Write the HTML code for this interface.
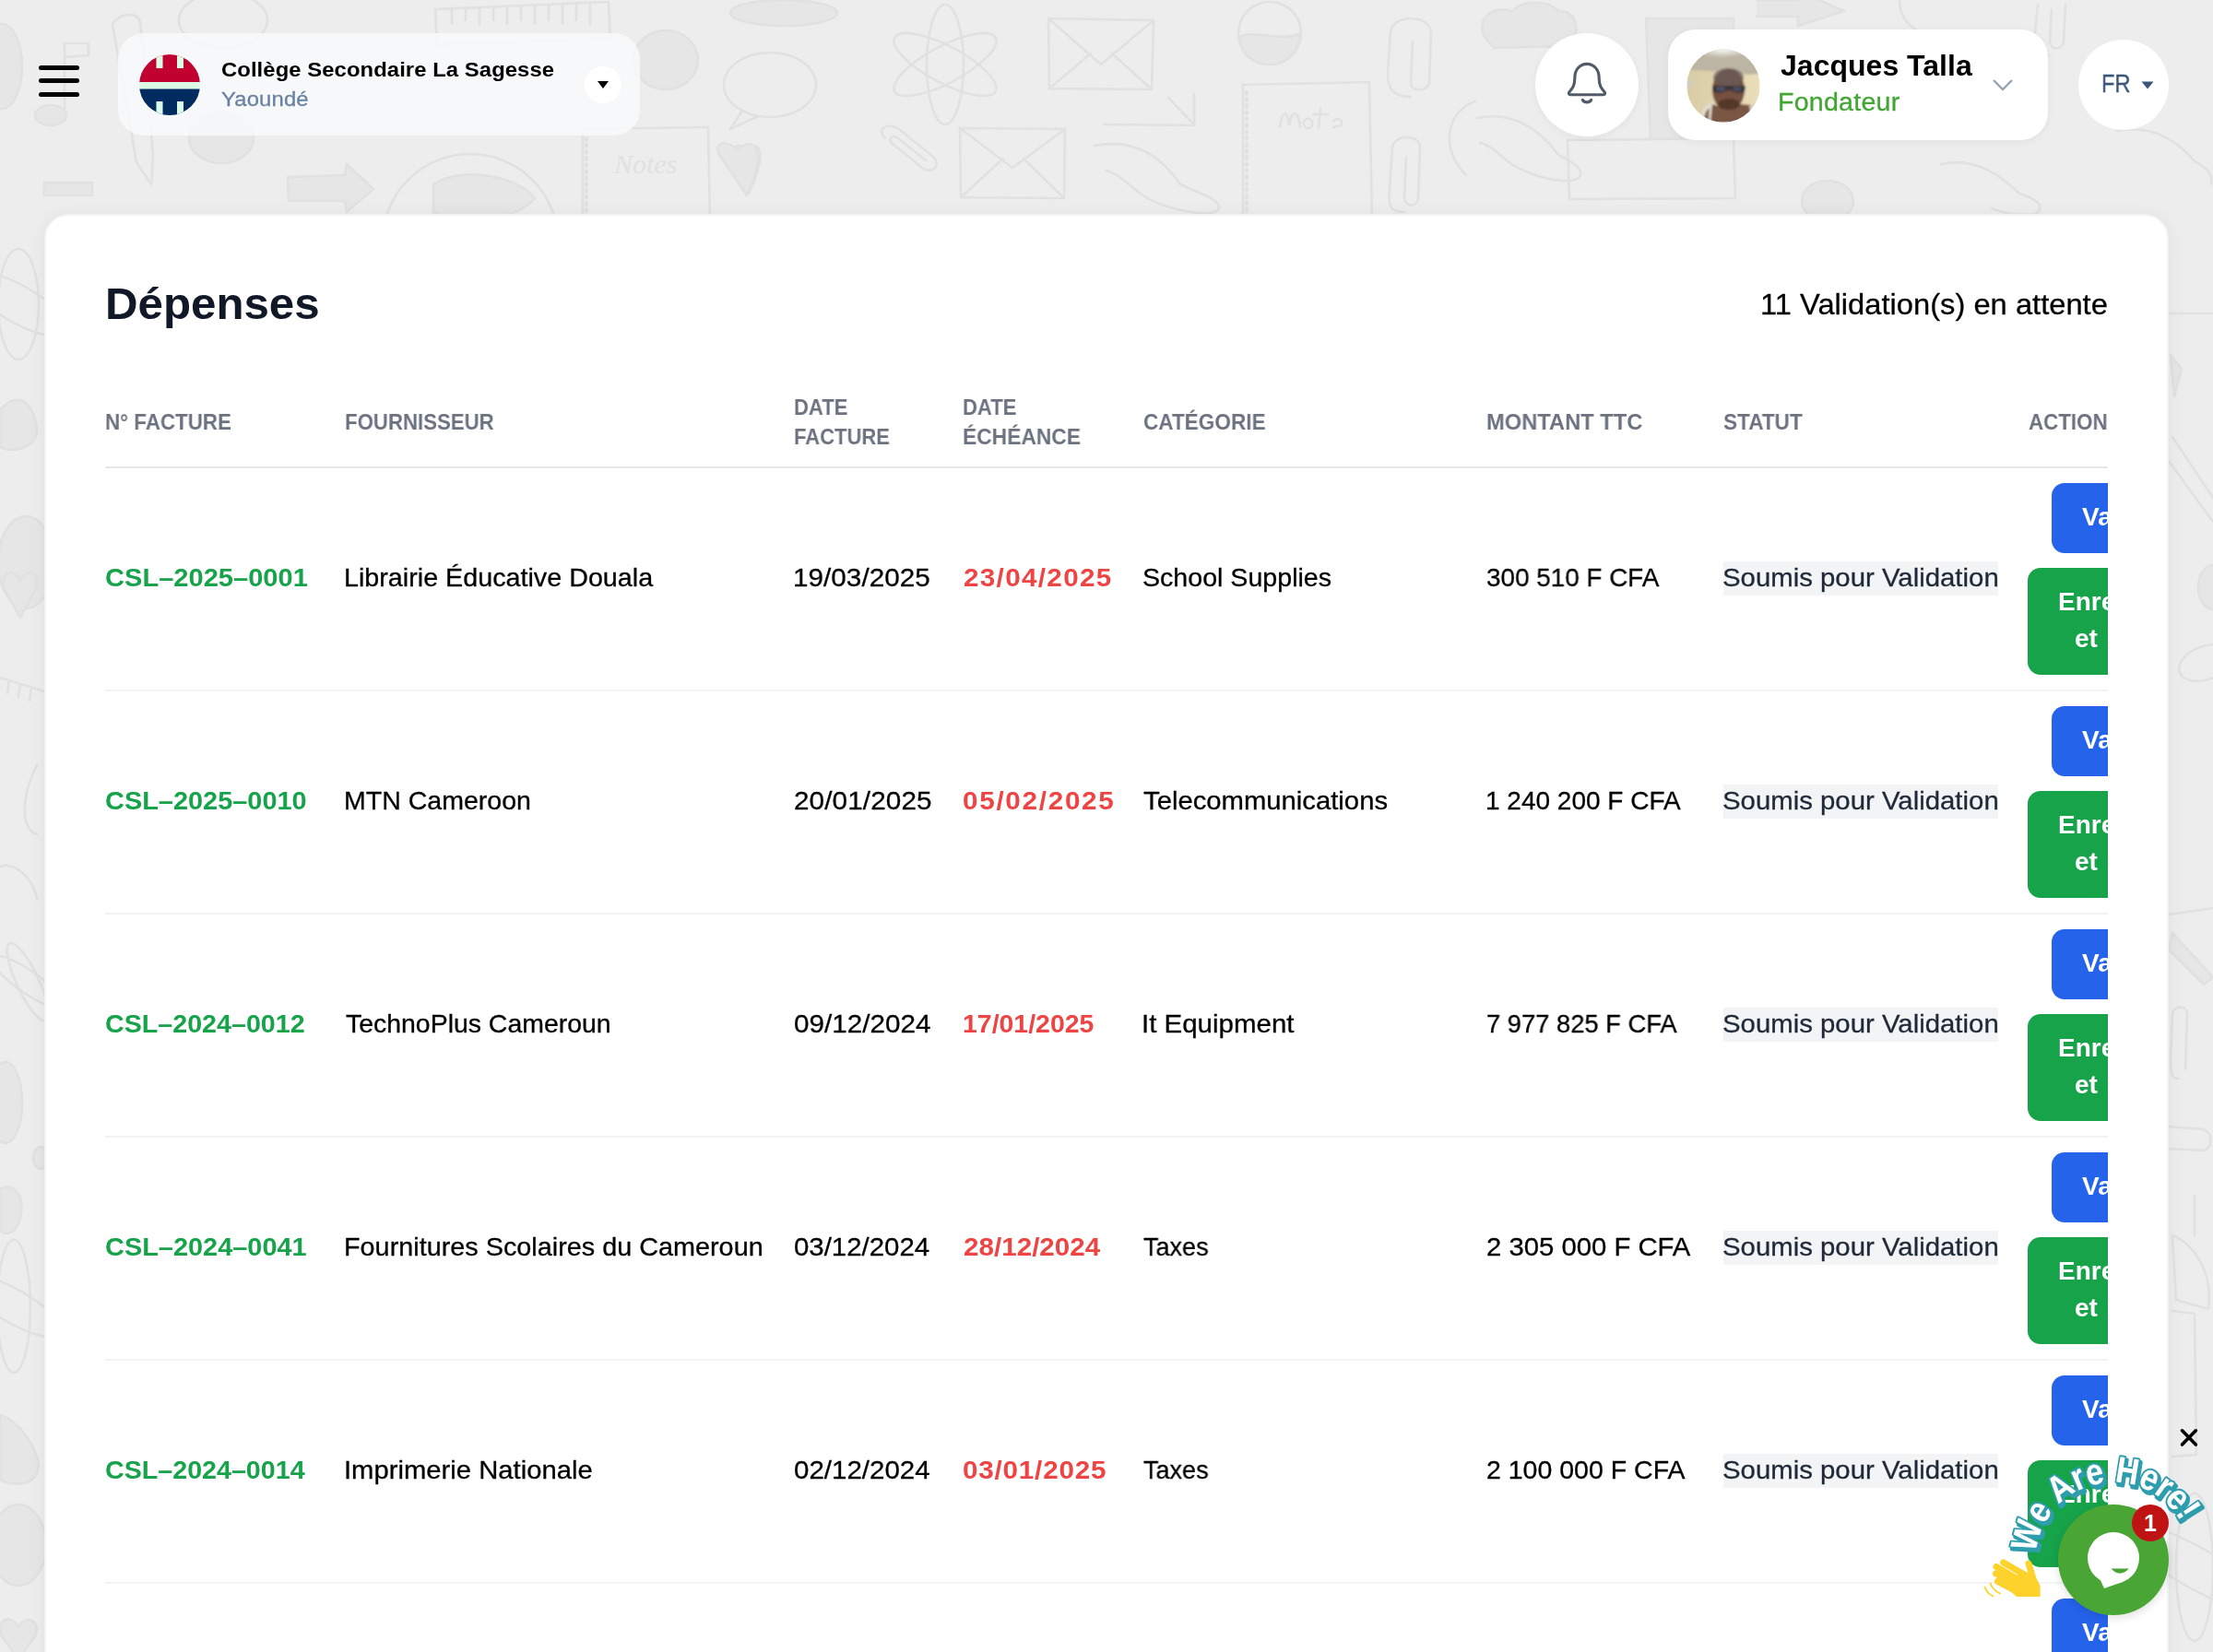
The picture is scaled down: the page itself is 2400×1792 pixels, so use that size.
<!DOCTYPE html>
<html><head><meta charset="utf-8">
<style>
html,body{margin:0;padding:0;}
body{width:2400px;height:1792px;overflow:hidden;position:relative;background:#ededed;font-family:"Liberation Sans",sans-serif;}
.a{position:absolute;}
.t{position:absolute;white-space:nowrap;line-height:1;font-family:"Liberation Sans",sans-serif;will-change:transform;}
.bar{position:absolute;left:42px;width:44px;height:5px;border-radius:3px;background:#000;}
.card{position:absolute;left:48px;top:232px;width:2300px;height:1700px;background:#fff;border:2px solid #f1f2f4;border-radius:26px;box-shadow:0 2px 20px rgba(0,0,0,0.06);}
.hl{position:absolute;left:114px;width:2172px;height:2px;background:#f3f4f6;}
.badge{position:absolute;left:1869px;width:298px;height:37px;background:#f3f4f6;}
.clip{position:absolute;left:0;top:0;width:2286px;height:1792px;overflow:hidden;}
.bb{position:absolute;left:2225px;width:200px;height:76px;background:#2563eb;border-radius:14px;}
.gb{position:absolute;left:2199px;width:250px;height:116px;background:#16a34a;border-radius:14px;}
.bt{position:absolute;white-space:nowrap;line-height:1;font-size:28px;font-weight:700;color:#fff;will-change:transform;}
</style></head>
<body>
<svg class="a" style="left:0;top:0" width="2400" height="1792" viewBox="0 0 2400 1792">
<g fill="none" stroke="#e1e1e1" stroke-width="2.6" stroke-linecap="round" stroke-linejoin="round">
<ellipse cx="2" cy="72" rx="22" ry="46" fill="#e6e6e6"/>
<path d="M70 125 L70 47 L96 47 L96 60 L70 62"/>
<ellipse cx="55" cy="125" rx="17" ry="11" fill="#e6e6e6"/>
<path d="M122 26 C130 14 148 12 152 24 L166 168 L164 200 L148 176 Z"/>
<ellipse cx="242" cy="22" rx="48" ry="30"/>
<ellipse cx="240" cy="150" rx="35" ry="27" fill="#e6e6e6"/>
<rect x="48" y="198" width="52" height="14" fill="#e6e6e6"/>
<path d="M312 192 L374 190 L376 178 L405 205 L376 230 L374 218 L313 218 Z" fill="#e6e6e6"/>
<circle cx="510" cy="262" r="95"/>
<path d="M470 200 C500 180 560 190 580 215 C560 240 500 245 470 230 Z" fill="#e6e6e6"/>
<path d="M472 10 L660 2 L662 42 L474 48 Z"/>
<path d="M490 10 L490 26 M505 9 L505 22 M520 9 L520 26 M535 8 L535 22 M550 8 L550 26 M565 7 L565 22 M580 7 L580 26 M595 6 L595 22 M610 5 L610 26 M625 5 L625 22 M640 4 L640 26"/>
<ellipse cx="722" cy="65" rx="35" ry="32" fill="#e6e6e6"/>
<path d="M630 140 L768 138 L770 240 M632 140 L632 240"/>
<path d="M636 150 L636 235" stroke-dasharray="2 5" stroke-width="4"/>
<ellipse cx="835" cy="92" rx="50" ry="35"/>
<path d="M805 120 L792 140 L822 126"/>
<ellipse cx="850" cy="14" rx="58" ry="14" fill="#e6e6e6"/>
<path d="M810 180 C790 160 800 150 810 165 C820 150 835 160 812 210 Z" fill="#e6e6e6"/>
<path d="M785 175 C770 158 782 148 800 162 C815 148 835 158 810 212 Z" fill="#e6e6e6"/>
<ellipse cx="1025" cy="70" rx="20" ry="65"/>
<ellipse cx="1025" cy="70" rx="62" ry="20" transform="rotate(28 1025 70)"/>
<ellipse cx="1025" cy="70" rx="62" ry="20" transform="rotate(-28 1025 70)"/>
<path d="M960 150 C950 140 962 132 975 140 L1012 170 C1022 180 1010 190 1000 182 L968 156 C962 150 968 146 974 150 L1004 174"/>
<path d="M1137 20 L1251 22 L1249 97 L1138 96 Z M1137 20 L1194 70 L1251 22 M1138 96 L1183 58 M1249 97 L1206 58"/>
<path d="M1041 139 L1155 140 L1154 215 L1042 214 Z M1041 139 L1098 182 L1155 140 M1042 214 L1088 172 M1154 215 L1110 172"/>
<path d="M1197 135 L1295 136 L1295 102 M1267 106 L1295 135"/>
<path d="M1187 158 C1230 150 1260 170 1280 200 C1300 210 1322 215 1322 225 C1320 235 1290 232 1260 222 C1230 212 1220 190 1200 185"/>
<circle cx="1377" cy="36" r="34"/>
<path d="M1344 40 C1360 32 1392 46 1410 36 C1408 60 1392 70 1377 70 C1360 70 1346 60 1344 40 Z" fill="#e6e6e6"/>
<path d="M1348 92 L1485 89 L1488 240 M1348 92 L1348 240"/>
<path d="M1352 100 L1352 235" stroke-dasharray="2 5" stroke-width="4"/>
<path d="M1388 138 C1390 120 1396 118 1398 135 C1402 118 1408 120 1410 138 M1414 132 C1418 125 1426 130 1422 138 C1416 142 1412 134 1414 132 M1432 118 L1430 138 M1424 124 L1440 124 M1446 132 C1450 126 1458 130 1454 136 L1446 138"/>
<path d="M1530 105 C1510 105 1505 95 1505 80 L1508 35 C1510 15 1550 15 1552 35 L1550 90 C1548 100 1530 100 1530 90 L1532 45"/>
<path d="M1523 230 C1505 230 1506 220 1507 205 L1510 160 C1512 145 1540 145 1540 160 L1538 215 C1537 225 1524 225 1523 215 L1525 170"/>
<path d="M1600 110 C1570 120 1560 160 1590 190"/>
<path d="M1610 40 C1600 20 1620 5 1640 12 C1650 0 1680 0 1690 12 C1712 10 1715 40 1700 50 L1620 52 Z" fill="#e6e6e6"/>
<path d="M1602 128 C1640 120 1670 140 1690 168 C1705 176 1716 182 1714 190 C1710 200 1680 196 1660 188 C1630 178 1625 160 1605 155"/>
<path d="M1700 152 L1880 150 L1882 215 L1702 216 Z"/>
<path d="M1785 20 L1880 20 L1878 150 L1790 150 Z" fill="#e6e6e6"/>
<ellipse cx="1982" cy="218" rx="28" ry="22" fill="#e6e6e6"/>
<path d="M2105 178 C2140 170 2170 190 2190 210 C2205 215 2215 220 2212 228 C2208 236 2180 234 2160 226"/>
<path d="M2296 142 C2330 135 2360 150 2380 175 C2395 182 2400 190 2398 200"/>
<path d="M2222 60 C2205 60 2206 50 2207 35 L2210 5 M2240 5 L2238 45 C2237 55 2224 55 2223 45 L2225 10"/>
<path d="M1905 0 L1950 0 L1950 -10 L2000 12 L1950 28 L1950 18 L1905 18" fill="#e6e6e6"/>
<path d="M2060 0 C2060 30 2090 45 2125 40"/>
<ellipse cx="20" cy="330" rx="22" ry="60"/>
<ellipse cx="20" cy="330" rx="60" ry="20" transform="rotate(30 20 330)"/>
<path d="M0 445 C20 420 40 440 40 470 C35 490 10 490 0 485 Z" fill="#e6e6e6"/>
<ellipse cx="28" cy="610" rx="30" ry="50" fill="#e6e6e6"/>
<path d="M5 640 C0 620 15 615 22 630 C30 615 45 620 38 640 L22 670 Z" fill="#e6e6e6"/>
<path d="M0 735 L48 750 M10 738 L8 752 M22 742 L20 756 M34 746 L32 760"/>
<path d="M40 830 C20 870 25 900 40 905"/>
<path d="M0 940 C15 935 35 950 40 975"/>
<ellipse cx="30" cy="1065" rx="12" ry="46" transform="rotate(-25 30 1065)"/>
<ellipse cx="30" cy="1065" rx="46" ry="12" transform="rotate(35 30 1065)"/>
<ellipse cx="6" cy="1196" rx="18" ry="44" fill="#e6e6e6"/>
<ellipse cx="44" cy="1256" rx="8" ry="12" fill="#e6e6e6"/>
<path d="M0 1290 C15 1280 28 1300 22 1320 C18 1340 5 1340 0 1335 Z" fill="#e6e6e6"/>
<ellipse cx="15" cy="1417" rx="18" ry="72"/>
<ellipse cx="15" cy="1417" rx="60" ry="18" transform="rotate(30 15 1417)"/>
<path d="M0 1535 C20 1540 40 1570 42 1590 C40 1610 20 1614 0 1605 Z" fill="#e6e6e6"/>
<ellipse cx="20" cy="1676" rx="30" ry="44" fill="#e6e6e6"/>
<path d="M2 1775 C-5 1755 12 1750 20 1765 C28 1750 45 1758 38 1775 L20 1800 Z" fill="#e6e6e6"/>
<path d="M2352 340 L2400 340"/>
<path d="M2354 385 L2366 400 L2358 430 Z" fill="#e6e6e6"/>
<path d="M2356 474 L2400 540 M2352 500 L2400 566"/>
<ellipse cx="2400" cy="637" rx="16" ry="24" fill="#e6e6e6"/>
<ellipse cx="2392" cy="719" rx="30" ry="18" transform="rotate(-20 2392 719)"/>
<path d="M2352 992 L2400 985"/>
<path d="M2356 1012 L2400 1060 L2390 1068 L2352 1030 Z" fill="#e6e6e6"/>
<path d="M2362 1170 C2354 1170 2354 1160 2354 1150 L2356 1100 C2358 1090 2372 1090 2372 1100 L2370 1160"/>
<path d="M2352 1222 L2390 1225 C2400 1230 2400 1245 2390 1248 L2352 1246"/>
<path d="M2380 1297 L2380 1340"/>
<path d="M2356 1340 C2380 1350 2400 1380 2395 1420 L2360 1410 Z"/>
<path d="M2356 1422 L2380 1425 L2382 1578 L2356 1580"/>
<ellipse cx="2380" cy="1700" rx="20" ry="80"/>
<ellipse cx="2380" cy="1700" rx="80" ry="22" transform="rotate(30 2380 1700)"/>
</g>
<text x="666" y="188" font-family="Liberation Serif" font-style="italic" font-size="30" fill="#e1e1e1">Notes</text>
</svg>
<div class="bar" style="top:71px"></div>
<div class="bar" style="top:85px"></div>
<div class="bar" style="top:100px"></div>

<div class="a" style="left:128px;top:36px;width:566px;height:111px;border-radius:28px;background:rgba(248,249,251,0.85);"></div>
<svg class="a" style="left:151px;top:59px" width="66" height="66" viewBox="0 0 66 66">
<defs><clipPath id="lc"><circle cx="33" cy="33" r="33"/></clipPath></defs>
<g clip-path="url(#lc)">
<rect x="0" y="0" width="66" height="30" fill="#c10230"/>
<rect x="0" y="30" width="66" height="7.5" fill="#dcfce7"/>
<rect x="0" y="37.5" width="66" height="30" fill="#002c5f"/>
<rect x="18.5" y="0" width="7" height="15" fill="#dcfce7"/>
<rect x="41" y="0" width="7" height="15" fill="#dcfce7"/>
<rect x="18.5" y="51" width="7" height="15" fill="#dcfce7"/>
<rect x="41" y="51" width="7" height="15" fill="#dcfce7"/>
</g></svg>
<div class="a" style="left:634px;top:72px;width:40px;height:40px;border-radius:50%;background:#fff;"></div>
<svg class="a" style="left:647px;top:87px" width="14" height="10" viewBox="0 0 14 10"><path d="M1 1 L13 1 L7 9 Z" fill="#000"/></svg>

<div class="a" style="left:1665px;top:36px;width:112px;height:112px;border-radius:50%;background:#fff;box-shadow:0 2px 8px rgba(0,0,0,0.05);"></div>
<svg class="a" style="left:1695px;top:62px" width="52" height="58" viewBox="0 0 52 58">
<g transform="translate(26 29) scale(0.94) translate(-26 -29)">
<path d="M7 41.5 C5 41.5 4.5 39.5 6 38 C9.5 34 12 31 12 22 C12 12.5 18 6 26 6 C34 6 40 12.5 40 22 C40 31 42.5 34 46 38 C47.5 39.5 47 41.5 45 41.5 Z" fill="none" stroke="#525b69" stroke-width="3.3" stroke-linejoin="round"/>
<path d="M21 47.5 C23 51 29 51 31 47.5" fill="none" stroke="#525b69" stroke-width="3.3" stroke-linecap="round"/>
</g></svg>

<div class="a" style="left:1809px;top:32px;width:412px;height:120px;border-radius:30px;background:#fff;box-shadow:0 2px 10px rgba(0,0,0,0.05);"></div>
<svg class="a" style="left:1829px;top:52.5px" width="80" height="80" viewBox="0 0 80 80">
<defs><clipPath id="av"><circle cx="40" cy="40" r="39.7"/></clipPath>
<radialGradient id="avt" cx="0.49" cy="0.0" r="0.38"><stop offset="0" stop-color="#ffffff"/><stop offset="1" stop-color="#ffffff" stop-opacity="0"/></radialGradient>
<linearGradient id="avw" x1="0" y1="0" x2="1" y2="0"><stop offset="0" stop-color="#d8cca6"/><stop offset="1" stop-color="#eadfba"/></linearGradient>
<filter id="avb"><feGaussianBlur stdDeviation="1"/></filter></defs>
<g clip-path="url(#av)"><g filter="url(#avb)">
<rect width="80" height="80" fill="url(#avw)"/>
<path d="M-2 -2 L82 -2 L82 27 L68 28 L40 25 L4 23 L-2 23 Z" fill="#bdb5a3"/>
<rect width="80" height="26" fill="url(#avt)"/>
<path d="M0 35 L9 35 L3 42 L0 44 Z" fill="#cfccc3"/>
<path d="M14 80 L19 64 L30 56 L28 80 Z" fill="#e4dfd3"/>
<path d="M17 80 L21 68 L25 64 L24 80 Z" fill="#8a6c58"/>
<path d="M26 80 L28 60 L40 64 L58 60 L71 61 L75 80 Z" fill="#7a5644"/>
<path d="M68 62 L77 59 L80 80 L72 80 Z" fill="#dcd4c4"/>
<ellipse cx="45.5" cy="44.5" rx="17.5" ry="23" fill="#76513f"/>
<ellipse cx="45.5" cy="31" rx="16.5" ry="10" fill="#6a5c5a" opacity="0.75"/>
<ellipse cx="46" cy="60" rx="12" ry="6" fill="#533725"/>
<path d="M28 40 L64 40 L63 47 L55 48 L47 45 L45 45 L37 48 L29 47 Z" fill="#3b3438"/>
<ellipse cx="37" cy="43.5" rx="5" ry="2.4" fill="#4c5266"/>
<ellipse cx="55" cy="43.5" rx="5" ry="2.4" fill="#4a4d60"/>
</g></g></svg>
<svg class="a" style="left:2159px;top:84px" width="26" height="16" viewBox="0 0 26 16"><path d="M3 3 L13 13 L23 3" fill="none" stroke="#97a3b6" stroke-width="2.4"/></svg>

<div class="a" style="left:2254px;top:43px;width:98px;height:98px;border-radius:50%;background:#fff;"></div>
<svg class="a" style="left:2321px;top:87px" width="16" height="11" viewBox="0 0 16 11"><path d="M1.5 1.5 L14.5 1.5 L8 9.5 Z" fill="#3b5578"/></svg>

<div class="card"></div>
<div class="a" style="left:114px;top:506px;width:2172px;height:2px;background:#e5e7eb;"></div>
<div class="hl" style="top:748px"></div>
<div class="hl" style="top:990px"></div>
<div class="hl" style="top:1232px"></div>
<div class="hl" style="top:1474px"></div>
<div class="hl" style="top:1716px"></div>
<div class="badge" style="top:609px"></div>
<div class="badge" style="top:851px"></div>
<div class="badge" style="top:1093px"></div>
<div class="badge" style="top:1335px"></div>
<div class="badge" style="top:1577px"></div>

<div class="clip">
<div class="bb" style="top:524px"></div>
<div class="bt" style="left:2258px;top:547.3px">Valider</div>
<div class="gb" style="top:616px"></div>
<div class="bt" style="left:2232px;top:639.3px">Enregistrer</div>
<div class="bt" style="left:2250px;top:678.7px">et</div>
<div class="bb" style="top:766px"></div>
<div class="bt" style="left:2258px;top:789.3px">Valider</div>
<div class="gb" style="top:858px"></div>
<div class="bt" style="left:2232px;top:881.3px">Enregistrer</div>
<div class="bt" style="left:2250px;top:920.7px">et</div>
<div class="bb" style="top:1008px"></div>
<div class="bt" style="left:2258px;top:1031.3px">Valider</div>
<div class="gb" style="top:1100px"></div>
<div class="bt" style="left:2232px;top:1123.3px">Enregistrer</div>
<div class="bt" style="left:2250px;top:1162.7px">et</div>
<div class="bb" style="top:1250px"></div>
<div class="bt" style="left:2258px;top:1273.3px">Valider</div>
<div class="gb" style="top:1342px"></div>
<div class="bt" style="left:2232px;top:1365.3px">Enregistrer</div>
<div class="bt" style="left:2250px;top:1404.7px">et</div>
<div class="bb" style="top:1492px"></div>
<div class="bt" style="left:2258px;top:1515.3px">Valider</div>
<div class="gb" style="top:1584px"></div>
<div class="bt" style="left:2232px;top:1607.3px">Enregistrer</div>
<div class="bt" style="left:2250px;top:1646.7px">et</div>
<div class="bb" style="top:1734px"></div>
<div class="bt" style="left:2258px;top:1757.3px">Valider</div>
</div>

<div class="t" style="left:240.00px;top:64.95px;font-size:22.5px;font-weight:700;color:#000;letter-spacing:0.061px;transform:scaleX(1.0600);transform-origin:0 0;">Collège Secondaire La Sagesse</div>
<div class="t" style="left:240.00px;top:96.55px;font-size:22.5px;font-weight:400;color:#6882a0;letter-spacing:0.137px;transform:scaleX(1.0600);transform-origin:0 0;-webkit-text-stroke:0.3px currentColor;">Yaoundé</div>
<div class="t" style="left:1930.50px;top:56.35px;font-size:31px;font-weight:700;color:#000;letter-spacing:0.000px;transform:scaleX(1.0333);transform-origin:0 0;">Jacques Talla</div>
<div class="t" style="left:1928.38px;top:98.14px;font-size:27px;font-weight:400;color:#42a633;letter-spacing:0.205px;transform:scaleX(1.0600);transform-origin:0 0;-webkit-text-stroke:0.3px currentColor;">Fondateur</div>
<div class="t" style="left:2279.21px;top:77.19px;font-size:28px;font-weight:400;color:#3b5578;letter-spacing:0.000px;transform:scaleX(0.8474);transform-origin:0 0;-webkit-text-stroke:0.3px currentColor;">FR</div>
<div class="t" style="left:113.89px;top:305.58px;font-size:47.5px;font-weight:700;color:#111827;letter-spacing:0.000px;transform:scaleX(1.0364);transform-origin:0 0;">Dépenses</div>
<div class="t" style="left:1908.96px;top:313.91px;font-size:32px;font-weight:400;color:#000;letter-spacing:0.000px;transform:scaleX(1.0218);transform-origin:0 0;-webkit-text-stroke:0.3px currentColor;">11 Validation(s) en attente</div>
<div class="t" style="left:113.57px;top:445.98px;font-size:24px;font-weight:700;color:#6b7280;letter-spacing:0.000px;transform:scaleX(0.9320);transform-origin:0 0;">N° FACTURE</div>
<div class="t" style="left:374.07px;top:445.98px;font-size:24px;font-weight:700;color:#6b7280;letter-spacing:0.000px;transform:scaleX(0.9259);transform-origin:0 0;">FOURNISSEUR</div>
<div class="t" style="left:861.08px;top:429.98px;font-size:24px;font-weight:700;color:#6b7280;letter-spacing:0.000px;transform:scaleX(0.9194);transform-origin:0 0;">DATE</div>
<div class="t" style="left:861.08px;top:461.98px;font-size:24px;font-weight:700;color:#6b7280;letter-spacing:0.000px;transform:scaleX(0.9170);transform-origin:0 0;">FACTURE</div>
<div class="t" style="left:1043.58px;top:429.98px;font-size:24px;font-weight:700;color:#6b7280;letter-spacing:0.000px;transform:scaleX(0.9194);transform-origin:0 0;">DATE</div>
<div class="t" style="left:1043.55px;top:461.98px;font-size:24px;font-weight:700;color:#6b7280;letter-spacing:0.000px;transform:scaleX(0.9501);transform-origin:0 0;">ÉCHÉANCE</div>
<div class="t" style="left:1240.00px;top:445.98px;font-size:24px;font-weight:700;color:#6b7280;letter-spacing:0.000px;transform:scaleX(0.9405);transform-origin:0 0;">CATÉGORIE</div>
<div class="t" style="left:1612.01px;top:445.98px;font-size:24px;font-weight:700;color:#6b7280;letter-spacing:0.000px;transform:scaleX(0.9872);transform-origin:0 0;">MONTANT TTC</div>
<div class="t" style="left:1868.80px;top:445.98px;font-size:24px;font-weight:700;color:#6b7280;letter-spacing:0.000px;transform:scaleX(0.9406);transform-origin:0 0;">STATUT</div>
<div class="t" style="left:2199.50px;top:445.98px;font-size:24px;font-weight:700;color:#6b7280;letter-spacing:0.000px;transform:scaleX(0.9300);transform-origin:0 0;width:93px;overflow:hidden;">ACTION</div>
<div class="t" style="left:113.66px;top:613.29px;font-size:28px;font-weight:700;color:#16a34a;letter-spacing:0.000px;transform:scaleX(1.0383);transform-origin:0 0;">CSL–2025–0001</div>
<div class="t" style="left:373.15px;top:613.29px;font-size:28px;font-weight:400;color:#000;letter-spacing:-0.000px;transform:scaleX(1.0253);transform-origin:0 0;-webkit-text-stroke:0.3px currentColor;">Librairie Éducative Douala</div>
<div class="t" style="left:859.88px;top:613.29px;font-size:28px;font-weight:400;color:#000;letter-spacing:0.020px;transform:scaleX(1.0600);transform-origin:0 0;-webkit-text-stroke:0.3px currentColor;">19/03/2025</div>
<div class="t" style="left:1044.60px;top:613.29px;font-size:28px;font-weight:700;color:#ef4444;letter-spacing:1.229px;transform:scaleX(1.0600);transform-origin:0 0;">23/04/2025</div>
<div class="t" style="left:1239.28px;top:613.29px;font-size:28px;font-weight:400;color:#000;letter-spacing:0.000px;transform:scaleX(1.0211);transform-origin:0 0;-webkit-text-stroke:0.3px currentColor;">School Supplies</div>
<div class="t" style="left:1611.81px;top:613.29px;font-size:28px;font-weight:400;color:#000;letter-spacing:0.000px;transform:scaleX(0.9944);transform-origin:0 0;-webkit-text-stroke:0.3px currentColor;">300 510 F CFA</div>
<div class="t" style="left:1868.15px;top:613.29px;font-size:28px;font-weight:400;color:#1f2937;letter-spacing:0.000px;transform:scaleX(1.0484);transform-origin:0 0;-webkit-text-stroke:0.3px currentColor;">Soumis pour Validation</div>
<div class="t" style="left:113.67px;top:855.29px;font-size:28px;font-weight:700;color:#16a34a;letter-spacing:-0.000px;transform:scaleX(1.0326);transform-origin:0 0;">CSL–2025–0010</div>
<div class="t" style="left:373.16px;top:855.29px;font-size:28px;font-weight:400;color:#000;letter-spacing:0.000px;transform:scaleX(1.0190);transform-origin:0 0;-webkit-text-stroke:0.3px currentColor;">MTN Cameroon</div>
<div class="t" style="left:860.94px;top:855.29px;font-size:28px;font-weight:400;color:#000;letter-spacing:0.102px;transform:scaleX(1.0600);transform-origin:0 0;-webkit-text-stroke:0.3px currentColor;">20/01/2025</div>
<div class="t" style="left:1043.54px;top:855.29px;font-size:28px;font-weight:700;color:#ef4444;letter-spacing:1.602px;transform:scaleX(1.0600);transform-origin:0 0;">05/02/2025</div>
<div class="t" style="left:1240.30px;top:855.29px;font-size:28px;font-weight:400;color:#000;letter-spacing:0.000px;transform:scaleX(1.0448);transform-origin:0 0;-webkit-text-stroke:0.3px currentColor;">Telecommunications</div>
<div class="t" style="left:1610.80px;top:855.29px;font-size:28px;font-weight:400;color:#000;letter-spacing:0.000px;transform:scaleX(1.0000);transform-origin:0 0;-webkit-text-stroke:0.3px currentColor;">1 240 200 F CFA</div>
<div class="t" style="left:1868.15px;top:855.29px;font-size:28px;font-weight:400;color:#1f2937;letter-spacing:0.000px;transform:scaleX(1.0484);transform-origin:0 0;-webkit-text-stroke:0.3px currentColor;">Soumis pour Validation</div>
<div class="t" style="left:113.68px;top:1097.29px;font-size:28px;font-weight:700;color:#16a34a;letter-spacing:-0.000px;transform:scaleX(1.0231);transform-origin:0 0;">CSL–2024–0012</div>
<div class="t" style="left:375.20px;top:1097.29px;font-size:28px;font-weight:400;color:#000;letter-spacing:0.000px;transform:scaleX(1.0153);transform-origin:0 0;-webkit-text-stroke:0.3px currentColor;">TechnoPlus Cameroun</div>
<div class="t" style="left:860.94px;top:1097.29px;font-size:28px;font-weight:400;color:#000;letter-spacing:0.000px;transform:scaleX(1.0594);transform-origin:0 0;-webkit-text-stroke:0.3px currentColor;">09/12/2024</div>
<div class="t" style="left:1043.58px;top:1097.29px;font-size:28px;font-weight:700;color:#ef4444;letter-spacing:0.000px;transform:scaleX(1.0161);transform-origin:0 0;">17/01/2025</div>
<div class="t" style="left:1238.19px;top:1097.29px;font-size:28px;font-weight:400;color:#000;letter-spacing:0.000px;transform:scaleX(1.0526);transform-origin:0 0;-webkit-text-stroke:0.3px currentColor;">It Equipment</div>
<div class="t" style="left:1611.82px;top:1097.29px;font-size:28px;font-weight:400;color:#000;letter-spacing:0.000px;transform:scaleX(0.9763);transform-origin:0 0;-webkit-text-stroke:0.3px currentColor;">7 977 825 F CFA</div>
<div class="t" style="left:1868.15px;top:1097.29px;font-size:28px;font-weight:400;color:#1f2937;letter-spacing:0.000px;transform:scaleX(1.0484);transform-origin:0 0;-webkit-text-stroke:0.3px currentColor;">Soumis pour Validation</div>
<div class="t" style="left:113.67px;top:1339.29px;font-size:28px;font-weight:700;color:#16a34a;letter-spacing:-0.000px;transform:scaleX(1.0326);transform-origin:0 0;">CSL–2024–0041</div>
<div class="t" style="left:373.14px;top:1339.29px;font-size:28px;font-weight:400;color:#000;letter-spacing:-0.000px;transform:scaleX(1.0287);transform-origin:0 0;-webkit-text-stroke:0.3px currentColor;">Fournitures Scolaires du Cameroun</div>
<div class="t" style="left:860.95px;top:1339.29px;font-size:28px;font-weight:400;color:#000;letter-spacing:0.000px;transform:scaleX(1.0501);transform-origin:0 0;-webkit-text-stroke:0.3px currentColor;">03/12/2024</div>
<div class="t" style="left:1044.60px;top:1339.29px;font-size:28px;font-weight:700;color:#ef4444;letter-spacing:0.000px;transform:scaleX(1.0579);transform-origin:0 0;">28/12/2024</div>
<div class="t" style="left:1240.30px;top:1339.29px;font-size:28px;font-weight:400;color:#000;letter-spacing:0.000px;transform:scaleX(0.9647);transform-origin:0 0;-webkit-text-stroke:0.3px currentColor;">Taxes</div>
<div class="t" style="left:1611.75px;top:1339.29px;font-size:28px;font-weight:400;color:#000;letter-spacing:0.000px;transform:scaleX(1.0459);transform-origin:0 0;-webkit-text-stroke:0.3px currentColor;">2 305 000 F CFA</div>
<div class="t" style="left:1868.15px;top:1339.29px;font-size:28px;font-weight:400;color:#1f2937;letter-spacing:0.000px;transform:scaleX(1.0484);transform-origin:0 0;-webkit-text-stroke:0.3px currentColor;">Soumis pour Validation</div>
<div class="t" style="left:113.68px;top:1581.29px;font-size:28px;font-weight:700;color:#16a34a;letter-spacing:-0.000px;transform:scaleX(1.0230);transform-origin:0 0;">CSL–2024–0014</div>
<div class="t" style="left:373.11px;top:1581.29px;font-size:28px;font-weight:400;color:#000;letter-spacing:0.000px;transform:scaleX(1.0440);transform-origin:0 0;-webkit-text-stroke:0.3px currentColor;">Imprimerie Nationale</div>
<div class="t" style="left:860.95px;top:1581.29px;font-size:28px;font-weight:400;color:#000;letter-spacing:0.000px;transform:scaleX(1.0537);transform-origin:0 0;-webkit-text-stroke:0.3px currentColor;">02/12/2024</div>
<div class="t" style="left:1043.54px;top:1581.29px;font-size:28px;font-weight:700;color:#ef4444;letter-spacing:0.725px;transform:scaleX(1.0600);transform-origin:0 0;">03/01/2025</div>
<div class="t" style="left:1240.30px;top:1581.29px;font-size:28px;font-weight:400;color:#000;letter-spacing:0.000px;transform:scaleX(0.9647);transform-origin:0 0;-webkit-text-stroke:0.3px currentColor;">Taxes</div>
<div class="t" style="left:1611.78px;top:1581.29px;font-size:28px;font-weight:400;color:#000;letter-spacing:0.000px;transform:scaleX(1.0180);transform-origin:0 0;-webkit-text-stroke:0.3px currentColor;">2 100 000 F CFA</div>
<div class="t" style="left:1868.15px;top:1581.29px;font-size:28px;font-weight:400;color:#1f2937;letter-spacing:0.000px;transform:scaleX(1.0484);transform-origin:0 0;-webkit-text-stroke:0.3px currentColor;">Soumis pour Validation</div>

<svg class="a" style="left:2140px;top:1540px;overflow:visible" width="260" height="252" viewBox="0 0 260 252">
<defs>
<filter id="sh" x="-30%" y="-30%" width="160%" height="160%"><feDropShadow dx="0" dy="3" stdDeviation="5" flood-color="#000" flood-opacity="0.12"/></filter>
<path id="arc" d="M 73.1 180.7 A 84 84 0 1 1 230.9 180.7"/>
</defs>
<path d="M226.5 11.8 L241.4 27 M241.4 11.8 L226.5 27" stroke="#000" stroke-width="3.6" stroke-linecap="round"/>
<circle cx="152" cy="152" r="60" fill="#4aa634" filter="url(#sh)"/>
<circle cx="152" cy="150" r="28" fill="#fff"/>
<path d="M136 170 L142 183 L162 176 Z" fill="#fff"/>
<path d="M149.5 161.6 Q159 172 168.8 161.6 Z" fill="#4aa634"/>
<circle cx="192" cy="112" r="20" fill="#c01414"/>
<text x="192" y="121" text-anchor="middle" font-family="Liberation Sans" font-weight="700" font-size="25" fill="#fff">1</text>
<g font-family="Liberation Sans" font-weight="700" font-size="40">
<text fill="#2e9dae" stroke="#2e9dae" stroke-width="5" stroke-linejoin="round" transform="translate(2,3)"><textPath href="#arc" startOffset="36.1" textLength="214" lengthAdjust="spacingAndGlyphs">We Are Here!</textPath></text>
<text fill="#fff" stroke="#2e9dae" stroke-width="4" stroke-linejoin="round" paint-order="stroke"><textPath href="#arc" startOffset="36.1" textLength="214" lengthAdjust="spacingAndGlyphs">We Are Here!</textPath></text>
</g>
<g stroke="#fdd22b" stroke-linecap="round" fill="none">
<path d="M32.7 155 L56.9 168.9" stroke-width="7"/>
<path d="M25 159.5 L53.3 176.1" stroke-width="7"/>
<path d="M24.5 167 L50.8 181" stroke-width="7"/>
<path d="M26.5 175.5 L48.4 187" stroke-width="7"/>
<path d="M60 156 L66 176" stroke-width="7"/>
<path d="M12.5 181.5 C14 186 17 189.5 21.5 191.5" stroke-width="1.8"/>
<path d="M18.5 177.5 C20 182 23.5 186 29 188.5" stroke-width="1.8"/>
</g>
<path d="M42 170 L64 164 L72.6 180 L72.6 192 L47 192 L38 184 Z" fill="#fdd22b"/>
</svg>

</body></html>
